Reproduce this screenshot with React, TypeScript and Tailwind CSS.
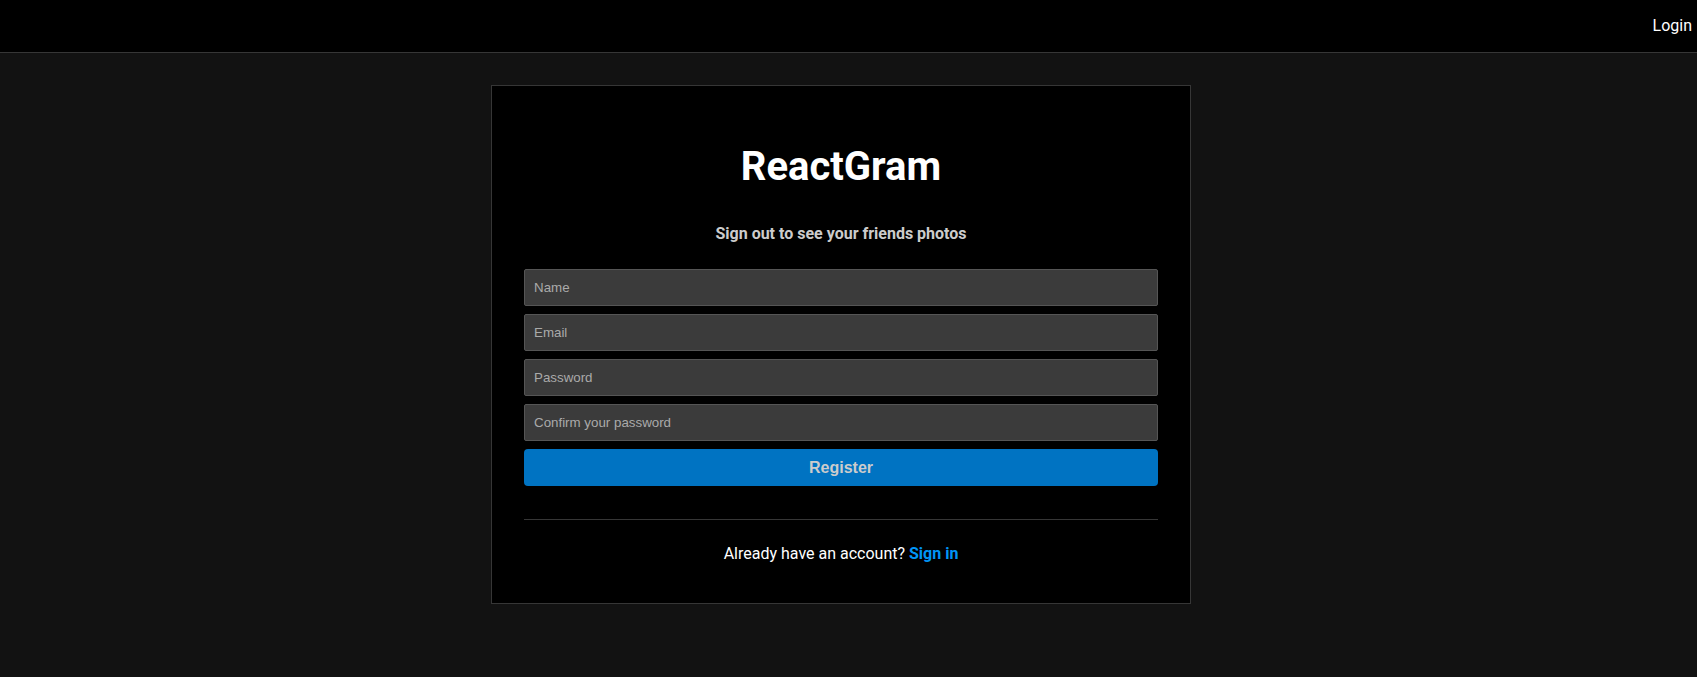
import React, { useState } from "react";

const Navbar = () => {
  return (
    <nav className="flex h-[53px] items-center justify-end border-b border-[#363636] bg-black pr-[5px]">
      <a href="#" className="text-base leading-6 text-white">
        Login
      </a>
    </nav>
  );
};

const Field = ({
  type,
  placeholder,
  value,
  onChange,
}: {
  type: string;
  placeholder: string;
  value: string;
  onChange: (v: string) => void;
}) => (
  <input
    type={type}
    placeholder={placeholder}
    value={value}
    onChange={(e) => onChange(e.target.value)}
    className="h-[37px] w-full rounded-[2px] border border-[#555] bg-[#3b3b3b] px-[9px] font-['Liberation_Sans',Arial,sans-serif] text-[13.33px] text-white outline-none placeholder:text-[#aaa]"
  />
);

const Register = () => {
  const [name, setName] = useState("");
  const [email, setEmail] = useState("");
  const [password, setPassword] = useState("");
  const [confirmPassword, setConfirmPassword] = useState("");

  return (
    <div className="w-[700px] border border-[#363636] bg-black px-8 pt-[57px] pb-[37px]">
      <h2 className="text-center text-[40px] leading-[48px] font-bold text-white">
        ReactGram
      </h2>
      <p className="mt-[31px] text-center text-base leading-6 font-bold text-[#ccc]">
        Sign out to see your friends photos
      </p>
      <form
        className="mt-[23px] flex flex-col gap-2"
        onSubmit={(e) => e.preventDefault()}
      >
        <Field type="text" placeholder="Name" value={name} onChange={setName} />
        <Field type="email" placeholder="Email" value={email} onChange={setEmail} />
        <Field
          type="password"
          placeholder="Password"
          value={password}
          onChange={setPassword}
        />
        <Field
          type="password"
          placeholder="Confirm your password"
          value={confirmPassword}
          onChange={setConfirmPassword}
        />
        <button
          type="submit"
          className="h-[37px] w-full cursor-pointer rounded-[4px] bg-[#0073c2] font-['Liberation_Sans',Arial,sans-serif] text-base font-bold text-[#ccc]"
        >
          Register
        </button>
      </form>
      <div className="mt-[33px] border-t border-[#363636] pt-[22px]">
        <p className="text-center text-base leading-6 text-white">
          Already have an account?{" "}
          <a href="#" className="font-bold text-[#0095f6]">
            Sign in
          </a>
        </p>
      </div>
    </div>
  );
}

export default function App() {
  return (
    <div className="min-h-[677px] bg-[#121212] font-['Roboto',sans-serif]">
      <Navbar />
      <main className="flex justify-center pt-[32px] pr-[15px]">
        <Register />
      </main>
    </div>
  );
}
